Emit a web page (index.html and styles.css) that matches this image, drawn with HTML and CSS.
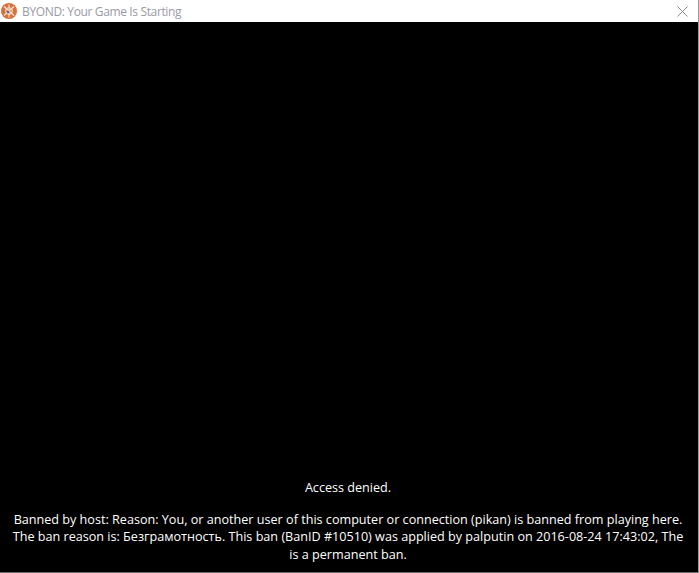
FILE: index.html
```html
<!DOCTYPE html>
<html lang="en">
<head>
    <meta charset="UTF-8">
    <title>BYOND: Your Game Is Starting</title>
    <link rel="stylesheet" href="styles.css">
</head>
<body>
    <div class="window">
        <div class="titlebar">
            <svg class="app-icon" width="16" height="16" viewBox="0 0 16 16">
                <circle cx="8" cy="8" r="8" fill="#d9713a"/>
                <g fill="none" stroke="#f6e3d6" stroke-width="1.1">
                    <path d="M3 3.5 13 12.5"/>
                    <path d="M13 3.5 3 12.5"/>
                    <path d="M8 1.5V14.5"/>
                    <circle cx="8" cy="8" r="3.2"/>
                </g>
                <circle cx="7" cy="9" r="1.3" fill="#3f6fb5"/>
                <circle cx="9.2" cy="7.6" r="1" fill="#f2c230"/>
            </svg>
            <span class="title">BYOND: Your Game Is Starting</span>
            <svg class="close" width="11" height="11" viewBox="0 0 11 11">
                <path d="M.5.5 10.5 10.5M10.5.5 .5 10.5" stroke="#8a8a8a" stroke-width="1" fill="none"/>
            </svg>
        </div>
        <div class="screen">
            <p class="denied">Access denied.</p>
            <p class="reason">Banned by host: Reason: You, or another user of this computer or connection (pikan) is banned from playing here. The ban reason is: Безграмотность. This ban (BanID #10510) was applied by palputin on 2016-08-24 17:43:02, The is a permanent ban.</p>
        </div>
    </div>
</body>
</html>
```

FILE: styles.css
```css
html, body {
    height: 100%;
}

body {
    margin: 0;
    background-color: #fff;
    font-family: "Open Sans", "Noto Sans", sans-serif;
}

.window {
    display: flex;
    flex-direction: column;
    height: 572px;
    width: 698px;
    border-right: 1px solid #9a9a9a;
    border-bottom: 1px solid #6e6e6e;
}

.titlebar {
    display: flex;
    align-items: center;
    height: 22px;
    padding: 0 10px 0 1px;
    background-color: #fff;
}

.app-icon {
    flex-shrink: 0;
}

.title {
    margin-left: 5px;
    font-size: 12px;
    letter-spacing: -0.36px;
    color: #9a9aa6;
}

.close {
    margin-left: auto;
}

.screen {
    flex: 1;
    display: flex;
    flex-direction: column;
    justify-content: flex-end;
    padding: 0 14px 9px 12px;
    background-color: #000;
    color: #fff;
    font-size: 12.62px;
    line-height: 17.5px;
    text-align: center;
}

.denied {
    margin: 0 0 14px;
}

.reason {
    margin: 0;
}
```
